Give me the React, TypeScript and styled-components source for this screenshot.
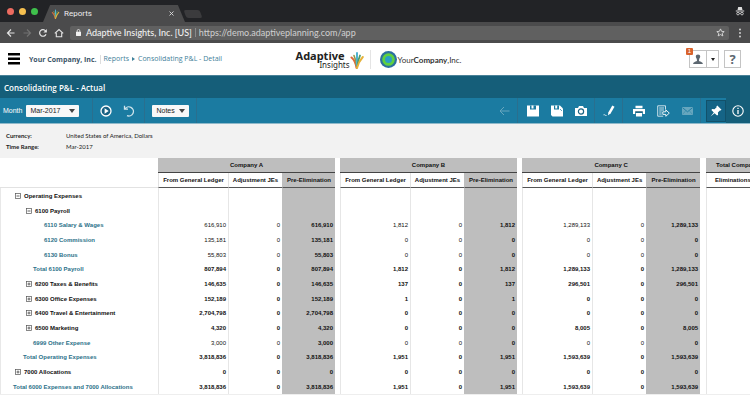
import React from "react";
import styled, { createGlobalStyle, css } from "styled-components";

const GlobalStyle = createGlobalStyle`
  *, *::before, *::after { box-sizing: border-box; }
  body { margin: 0; background: #fff; font-family: "Liberation Sans", Arial, sans-serif; }
  button, input, select { font: inherit; color: inherit; margin: 0; padding: 0; border: 0; background: none; }
  a { color: inherit; text-decoration: none; }
  svg { display: block; flex: none; }
`;

const Page = styled.div`
  display: flex;
  flex-direction: column;
  min-height: 100vh;
  overflow: hidden;
`;

/* Browser window */

const TabStrip = styled.div`
  display: flex;
  align-items: flex-end;
  height: 22px;
  padding: 0 5px 0 7px;
  background: #222326;
`;

const WindowButtons = styled.div`
  display: flex;
  align-self: center;
  gap: 5px;
`;

const WindowButton = styled.button<{ $color: string }>`
  width: 7px;
  height: 7px;
  border-radius: 50%;
  background: ${(p) => p.$color};
`;

const Tab = styled.div`
  display: flex;
  align-items: center;
  width: 142px;
  height: 17px;
  margin-left: 5px;
  padding: 0 10px 0 8px;
  background: #4b4b4c;
  color: #ececec;
  clip-path: polygon(5% 0, 95% 0, 100% 100%, 0 100%);
  font: 8px/12px Roboto, sans-serif;
`;

const TabTitle = styled.span`
  flex: 1;
  margin-left: 4px;
`;

const TabClose = styled.button`
  display: flex;
  padding: 1px;
`;

const NewTab = styled.button`
  align-self: center;
  width: 16px;
  height: 8px;
  margin: 6px 0 0 0;
  border-radius: 2px;
  background: #3b3b3d;
  transform: skewX(20deg);
`;

const Incognito = styled.div`
  align-self: center;
  margin-left: auto;
`;

const AddressRow = styled.div`
  display: flex;
  align-items: center;
  height: 21px;
  padding: 0 7px 0 6px;
  background: #4b4b4c;
  color: #e2e2e2;
`;

const NavButtons = styled.div`
  display: flex;
  gap: 6px;
`;

const NavButton = styled.button`
  display: flex;
  &:disabled { color: #727272; }
`;

const Omnibox = styled.div`
  display: flex;
  flex: 1;
  align-items: center;
  height: 14px;
  margin: 0 8px 0 6px;
  padding: 0 4px 0 6px;
  border-radius: 2px;
  background: #606060;
  font: 9px/14px Lato, sans-serif;
`;

const SiteIdentity = styled.span`
  margin: 0 3px 0 5px;
  padding-right: 3px;
  border-right: 1px solid #8a8a8a;
  line-height: 9px;
  font-weight: 500;
  color: #f0f0f0;
  white-space: nowrap;
`;

const UrlInput = styled.input`
  flex: 1;
  min-width: 0;
  height: 14px;
  color: #d0d0d0;
  outline: none;
`;

/* Application header */

const AppHeader = styled.header`
  display: grid;
  grid-template-columns: 1fr auto 1fr;
  align-items: center;
  height: 32px;
  padding: 0 9px 0 8px;
`;

const HeaderLeft = styled.div`
  display: flex;
  align-items: center;
  gap: 9px;
`;

const MenuButton = styled.button`
  display: flex;
`;

const Breadcrumbs = styled.nav`
  display: flex;
  align-items: center;
  color: #3f819a;
  font: 7px/12px "Open Sans", sans-serif;
  white-space: nowrap;
`;

const CrumbHome = styled.a`
  margin-right: 3px;
  padding-right: 3px;
  border-right: 1px solid #ddd;
  color: #3b5468;
  font-weight: 700;
  line-height: 9px;
`;

const CrumbMark = styled.span`
  margin: 0 3px;
`;

const Logos = styled.div`
  display: flex;
  align-items: center;
  margin: 1px 0 0 8px;
`;

const AdaptiveLogo = styled.div`
  display: flex;
  align-items: center;
  padding-right: 6px;
  border-right: 1px solid #e4e4e4;
`;

const Wordmark = styled.div`
  display: flex;
  flex-direction: column;
  align-items: flex-end;
  color: #222;
  font: 8px/8px "Noto Sans", sans-serif;

  strong {
    margin-right: 5px;
    font: 700 11px/11px "Noto Sans", sans-serif;
  }
`;

const CompanyLogo = styled.div`
  display: flex;
  align-items: center;
  padding-left: 9px;
  gap: 1px;
  color: #333;
  font: 8px/12px Lato, sans-serif;
`;

const HeaderRight = styled.div`
  display: flex;
  justify-content: flex-end;
  gap: 5px;
`;

const UserMenu = styled.div`
  position: relative;
  display: flex;
`;

const BoxButton = styled.button<{ $width: number }>`
  display: flex;
  align-items: center;
  justify-content: center;
  width: ${(p) => p.$width}px;
  height: 18px;
  border: 1px solid #c4c4c4;
  color: #5c6770;
  font: 700 13px/16px "Open Sans", sans-serif;
  & + & { border-left: 0; }
`;

const Badge = styled.span`
  position: absolute;
  top: -2px;
  left: -3px;
  width: 7px;
  height: 7px;
  border-radius: 1px;
  background: #d9622b;
  color: #fff;
  font: 6px/7px "Liberation Sans", sans-serif;
  text-align: center;
`;

/* Report chrome */

const TitleBar = styled.h1`
  margin: 0;
  padding: 4px 4px 3px;
  border-top: 1px solid #4a8298;
  background: #155e79;
  color: #fff;
  font: 600 8px/15px "Open Sans", sans-serif;
`;

const Toolbar = styled.div`
  display: flex;
  align-items: stretch;
  height: 26px;
  border-bottom: 1px solid #8fb9ca;
  background: #1b7ba1;
  color: #fff;
`;

const ToolGroup = styled.div<{ $gap: number; $pad: string }>`
  display: flex;
  align-items: center;
  gap: ${(p) => p.$gap}px;
  padding: ${(p) => p.$pad};
  border-right: 1px solid #2a6f8e;
  &:last-of-type { border-right: 0; }
`;

const ToolSpacer = styled.div`
  flex: 1;
`;

const FieldLabel = styled.label`
  display: flex;
  align-items: center;
  gap: 4px;
  font: 7px/12px "Liberation Sans", sans-serif;
`;

const SelectBox = styled.span<{ $width: number }>`
  position: relative;
  display: flex;
  width: ${(p) => p.$width}px;

  svg {
    position: absolute;
    right: 4px;
    top: 4px;
    pointer-events: none;
  }
`;

const Select = styled.select`
  width: 100%;
  height: 12px;
  padding: 0 4px;
  border-radius: 1px;
  background: #f8f8f8;
  color: #222;
  font: 7px/12px "Liberation Sans", sans-serif;
  appearance: none;
`;

const ToolButton = styled.button<{ $on?: boolean }>`
  display: flex;
  align-items: center;
  justify-content: center;
  &:disabled { color: #66a6be; }
  ${(p) =>
    p.$on &&
    css`
      width: 20px;
      height: 22px;
      border: 1px solid #12516a;
      background: #156486;
    `}
`;

const InfoButton = styled(ToolButton)`
  width: 24px;
  background: #155e79;
`;

const Meta = styled.dl`
  display: grid;
  grid-template-columns: 60px 1fr;
  row-gap: 1px;
  margin: 0;
  padding: 7px 6px 6px;
  background: #f2f2f2;
  color: #222;
  font: 6px/10px Lato, sans-serif;

  dt { font-weight: 700; }
  dd { margin: 0; }
`;

/* Report table */

const TableScroller = styled.div`
  overflow: hidden;
`;

const Table = styled.table`
  width: 100%;
  min-width: 776px;
  table-layout: fixed;
  border-collapse: separate;
  border-spacing: 0;
  border-bottom: 1px solid #eee;
  color: #111;
  font: 6px/10px "Liberation Sans", sans-serif;
  white-space: nowrap;

  th, td { padding: 0; }
`;

const Col = styled.col<{ $width?: number }>`
  width: ${(p) => (p.$width ? `${p.$width}px` : "auto")};
`;

const GroupHead = styled.th<{ $left?: boolean }>`
  height: 15px;
  border-bottom: 1px solid #444;
  background: #bebebe;

  && {
    text-align: ${(p) => (p.$left ? "left" : "center")};
    padding-left: ${(p) => (p.$left ? 10 : 0)}px;
  }
`;

const ColumnHead = styled.th<{ $shaded?: boolean; $left?: boolean }>`
  height: 15px;
  border-bottom: 1px solid #555;
  border-left: 1px solid ${(p) => (p.$shaded ? "#bebebe" : "#e2e2e2")};
  background: ${(p) => (p.$shaded ? "#bebebe" : "#fff")};

  && {
    text-align: ${(p) => (p.$left ? "left" : "center")};
    padding-left: ${(p) => (p.$left ? 8 : 0)}px;
  }
`;

const CornerHead = styled.th`
  border-bottom: 1px solid #e2e2e2;
`;

const BodyRow = styled.tr`
  height: 15px;
  &:nth-child(3n) { height: 14px; }
`;

const Gap = styled.td``;

const RowHead = styled.th<{ $indent: number; $link?: boolean }>`
  border-left: 1px solid #e8e8e8;
  text-align: left;
  color: ${(p) => (p.$link ? "#2b7189" : "#111")};
  && { padding-left: ${(p) => p.$indent}px; }
`;

const RowLabel = styled.span`
  display: flex;
  align-items: center;
  gap: 3px;
`;

const Expander = styled.button`
  display: flex;
  color: #555;
`;

const Value = styled.td<{ $bold?: boolean; $shaded?: boolean }>`
  border-left: 1px solid ${(p) => (p.$shaded ? "#bebebe" : "#e6e6e6")};
  background: ${(p) => (p.$shaded ? "#bebebe" : "#fff")};
  font-weight: ${(p) => (p.$bold ? 700 : 400)};
  text-align: right;
  && { padding-right: 2px; }
`;

type Row = {
  label: string;
  indent: number;
  expander?: "open" | "closed";
  link?: boolean;
  plain?: boolean;
  values?: [string, string, string];
};

const rows: Row[] = [
  { label: "Operating Expenses", indent: 14, expander: "open" },
  { label: "6100 Payroll", indent: 25, expander: "open" },
  { label: "6110 Salary & Wages", indent: 43, link: true, plain: true, values: ["616,910", "1,812", "1,289,133"] },
  { label: "6120 Commission", indent: 43, link: true, plain: true, values: ["135,181", "0", "0"] },
  { label: "6130 Bonus", indent: 43, link: true, plain: true, values: ["55,803", "0", "0"] },
  { label: "Total 6100 Payroll", indent: 32, link: true, values: ["807,894", "1,812", "1,289,133"] },
  { label: "6200 Taxes & Benefits", indent: 25, expander: "closed", values: ["146,635", "137", "296,501"] },
  { label: "6300 Office Expenses", indent: 25, expander: "closed", values: ["152,189", "1", "0"] },
  { label: "6400 Travel & Entertainment", indent: 25, expander: "closed", values: ["2,704,798", "0", "0"] },
  { label: "6500 Marketing", indent: 25, expander: "closed", values: ["4,320", "0", "8,005"] },
  { label: "6999 Other Expense", indent: 32, link: true, plain: true, values: ["3,000", "0", "0"] },
  { label: "Total Operating Expenses", indent: 22, link: true, values: ["3,818,836", "1,951", "1,593,639"] },
  { label: "7000 Allocations", indent: 14, expander: "closed", values: ["0", "0", "0"] },
  { label: "Total 6000 Expenses and 7000 Allocations", indent: 12, link: true, values: ["3,818,836", "1,951", "1,593,639"] },
];

const companies = ["Company A", "Company B", "Company C"];

const columnWidths = [
  [70, 54, 53, 5],
  [70, 54, 53, 5],
  [70, 54, 54, 6],
];

const Leaf = ({ width, height }: { width: number; height: number }) => (
  <svg width={width} height={height} viewBox="0 0 14 18" fill="none" strokeLinecap="round">
    <path d="M6.5 17C6 13 4.500 9 1.500 6.500" stroke="#e0693c" strokeWidth="2" />
    <path d="M6.500 15C6.500 12 5.500 8 4 4.500" stroke="#8f9a4c" strokeWidth="1.600" />
    <path d="M7 14V2" stroke="#4fb3d2" strokeWidth="2" />
    <path d="M7.500 14C8 10 9 7 10 4.500" stroke="#4f9b6a" strokeWidth="1.800" />
    <path d="M7 17C8 13 10 9 12.800 6" stroke="#e5b23a" strokeWidth="2" />
  </svg>
);

const Caret = () => (
  <svg width="6" height="4" viewBox="0 0 6 4">
    <path d="M0 0h6L3 4z" fill="#444" />
  </svg>
);

const ExpanderIcon = ({ closed }: { closed: boolean }) => (
  <svg width="6" height="6" viewBox="0 0 6 6" fill="none" stroke="currentColor">
    <rect x=".5" y=".5" width="5" height="5" strokeWidth=".7" />
    <path d={closed ? "M1.500 3h3M3 1.500v3" : "M1.500 3h3"} strokeWidth=".9" />
  </svg>
);

export default function App() {
  return (
    <Page>
      <GlobalStyle />
      <TabStrip>
        <WindowButtons>
          <WindowButton $color="#ed6b60" aria-label="Close window" />
          <WindowButton $color="#f5bf4f" aria-label="Minimize window" />
          <WindowButton $color="#3fc04c" aria-label="Zoom window" />
        </WindowButtons>
        <Tab>
          <Leaf width={9} height={10} />
          <TabTitle>Reports</TabTitle>
          <TabClose aria-label="Close tab">
            <svg width="5" height="5" viewBox="0 0 5 5" stroke="#ddd" strokeWidth=".9">
              <path d="M.5.5l4 4M4.500.5l-4 4" />
            </svg>
          </TabClose>
        </Tab>
        <NewTab aria-label="New tab" />
        <Incognito>
          <svg width="10" height="10" viewBox="0 0 10 10" fill="#ddd">
            <path d="M2.500 4L3.200 1h3.600l.7 3zM.8 4.600h8.400v.9H.8z" />
            <g fill="none" stroke="#ddd" strokeWidth=".8">
              <circle cx="3" cy="7.600" r="1.300" />
              <circle cx="7" cy="7.600" r="1.300" />
              <path d="M4.300 7.400h1.400" />
            </g>
          </svg>
        </Incognito>
      </TabStrip>

      <AddressRow>
        <NavButtons>
          <NavButton aria-label="Back">
            <svg width="10" height="10" viewBox="0 0 10 10" fill="none" stroke="currentColor" strokeWidth="1.200">
              <path d="M8.500 5h-7M5 1.500L1.500 5 5 8.500" />
            </svg>
          </NavButton>
          <NavButton aria-label="Forward" disabled>
            <svg width="10" height="10" viewBox="0 0 10 10" fill="none" stroke="currentColor" strokeWidth="1.200">
              <path d="M1.500 5h7M5 1.500L8.500 5 5 8.500" />
            </svg>
          </NavButton>
          <NavButton aria-label="Reload">
            <svg width="10" height="10" viewBox="0 0 10 10" fill="none" stroke="currentColor" strokeWidth="1.200">
              <path d="M8 6.200A3.300 3.300 0 1 1 7.600 3L8.300 3.700" />
              <path d="M8.800 1v3.400H5.400z" fill="currentColor" stroke="none" />
            </svg>
          </NavButton>
          <NavButton aria-label="Home">
            <svg width="10" height="10" viewBox="0 0 10 10" fill="none" stroke="currentColor" strokeWidth="1.100">
              <path d="M.8 5.300L5 1.500l4.200 3.800M2.300 4.800v3.900h5.400V4.800" />
            </svg>
          </NavButton>
        </NavButtons>
        <Omnibox>
          <svg width="5" height="7" viewBox="0 0 5 7">
            <rect y="2.700" width="5" height="4.300" rx=".4" fill="#f2f2f2" />
            <path d="M1.200 3V1.800a1.300 1.300 0 0 1 2.600 0V3" fill="none" stroke="#f2f2f2" strokeWidth=".8" />
          </svg>
          <SiteIdentity>Adaptive Insights, Inc. [US]</SiteIdentity>
          <UrlInput aria-label="Address" defaultValue="https://demo.adaptiveplanning.com/app" />
          <NavButton aria-label="Bookmark">
            <svg width="9" height="9" viewBox="0 0 10 10" fill="none" stroke="#ddd" strokeWidth="1">
              <path d="M5 1l1.200 2.700 2.900.3-2.200 1.900.7 2.900L5 7.300 2.400 8.800l.7-2.900L.9 4l2.900-.3z" />
            </svg>
          </NavButton>
        </Omnibox>
        <NavButton aria-label="Browser menu">
          <svg width="6" height="10" viewBox="0 0 6 10" fill="#ddd">
            <circle cx="3" cy="1.500" r=".9" />
            <circle cx="3" cy="5" r=".9" />
            <circle cx="3" cy="8.500" r=".9" />
          </svg>
        </NavButton>
      </AddressRow>

      <AppHeader>
        <HeaderLeft>
          <MenuButton aria-label="Menu">
            <svg width="12" height="12" viewBox="0 0 12 12" fill="#000">
              <path d="M0 0h12v2.500H0zM0 4.500h12V7H0zM0 9h12v2.500H0z" />
            </svg>
          </MenuButton>
          <Breadcrumbs aria-label="Breadcrumb">
            <CrumbHome href="#home">Your Company, Inc.</CrumbHome>
            <a href="#reports">Reports</a>
            <CrumbMark>
              <svg width="3" height="4" viewBox="0 0 3 4">
                <path d="M0 0l3 2-3 2z" fill="#3f819a" />
              </svg>
            </CrumbMark>
            <a href="#detail">Consolidating P&amp;L - Detail</a>
          </Breadcrumbs>
        </HeaderLeft>
        <Logos>
          <AdaptiveLogo>
            <Wordmark>
              <strong>Adaptive</strong>
              <span>Insights</span>
            </Wordmark>
            <Leaf width={14} height={18} />
          </AdaptiveLogo>
          <CompanyLogo>
            <svg width="17" height="17" viewBox="0 0 17 17">
              <circle cx="8.500" cy="8.500" r="8.500" fill="#2b6f9f" />
              <circle cx="8.500" cy="8.500" r="6.300" fill="#5fd03f" />
              <circle cx="8.500" cy="8.500" r="3.500" fill="#2a9fc4" />
            </svg>
            <span>
              Your<b>Company</b>,Inc.
            </span>
          </CompanyLogo>
        </Logos>
        <HeaderRight>
          <UserMenu>
            <BoxButton $width={18} aria-label="Account">
              <svg width="10" height="11" viewBox="0 0 10 11" fill="currentColor">
                <path d="M5 .5c1.400 0 2.200.9 2.200 2.100S6.400 4.400 6.200 5l-.2 2c.3.500 3.700.6 3.900 3H.1C.3 7.600 3.700 7.500 4 7l-.2-2c-.2-.6-1-1.200-1-2.400S3.600.5 5 .5z" />
              </svg>
            </BoxButton>
            <BoxButton $width={12} aria-label="Account options">
              <svg width="4" height="3" viewBox="0 0 4 3">
                <path d="M0 0h4L2 3z" fill="#222" />
              </svg>
            </BoxButton>
            <Badge>1</Badge>
          </UserMenu>
          <BoxButton $width={17} aria-label="Help">
            ?
          </BoxButton>
        </HeaderRight>
      </AppHeader>

      <TitleBar>Consolidating P&amp;L - Actual</TitleBar>

      <Toolbar>
        <ToolGroup $gap={0} $pad="0 13px 0 3px">
          <FieldLabel>
            Month
            <SelectBox $width={53}>
              <Select defaultValue="Mar-2017">
                <option>Mar-2017</option>
              </Select>
              <Caret />
            </SelectBox>
          </FieldLabel>
        </ToolGroup>
        <ToolGroup $gap={11} $pad="0 9px 0 7px">
          <ToolButton aria-label="Run">
            <svg width="12" height="12" viewBox="0 0 12 12">
              <circle cx="6" cy="6" r="5" fill="#176083" stroke="#fff" strokeWidth="1.300" />
              <path d="M4.600 3.300L8.700 6 4.600 8.700z" fill="#fff" />
            </svg>
          </ToolButton>
          <ToolButton aria-label="Reset">
            <svg width="12" height="12" viewBox="0 0 12 12" fill="none" stroke="#cfe4ec" strokeWidth="1.300">
              <path d="M1.500.8v3.400H5M1.800 4.200A4.600 4.600 0 1 1 4 10.700" />
            </svg>
          </ToolButton>
        </ToolGroup>
        <ToolGroup $gap={0} $pad="0 7px">
          <SelectBox $width={37}>
            <Select aria-label="Notes" defaultValue="Notes">
              <option>Notes</option>
            </Select>
            <Caret />
          </SelectBox>
        </ToolGroup>
        <ToolSpacer />
        <ToolGroup $gap={0} $pad="0 7px">
          <ToolButton aria-label="Back" disabled>
            <svg width="11" height="10" viewBox="0 0 11 10" fill="none" stroke="currentColor" strokeWidth="1">
              <path d="M10.500 5H1M5 1L1 5l4 4" />
            </svg>
          </ToolButton>
        </ToolGroup>
        <ToolGroup $gap={12} $pad="0 7px 0 9px">
          <ToolButton aria-label="Save">
            <svg width="12" height="12" viewBox="0 0 12 12" fill="#fff">
              <path d="M0 .5h12v11H0z" />
              <path d="M3 .5h6v4H3z" fill="#1b7ba1" />
              <path d="M4.500.5h2v3h-2z" />
            </svg>
          </ToolButton>
          <ToolButton aria-label="Save as">
            <svg width="12" height="12" viewBox="0 0 12 12" fill="#fff">
              <path d="M0 .5h9l3 3v8H1.500L0 10z" />
              <path d="M3 .5h5v4H3z" fill="#1b7ba1" />
              <path d="M4.200.5h2v3h-2z" />
              <path d="M9 4L11 6" stroke="#1b7ba1" strokeWidth=".7" />
            </svg>
          </ToolButton>
          <ToolButton aria-label="Snapshot">
            <svg width="12" height="12" viewBox="0 0 12 12" fill="#fff">
              <path d="M0 3h3l1-2h4l1 2h3v8H0z" />
              <circle cx="6" cy="6.500" r="2.600" fill="none" stroke="#1b6483" strokeWidth="1.200" />
            </svg>
          </ToolButton>
        </ToolGroup>
        <ToolGroup $gap={0} $pad="0 7px 0 8px">
          <ToolButton aria-label="Edit">
            <svg width="12" height="12" viewBox="0 0 12 12" fill="#fff">
              <path d="M9.300.5L11.500 1.700 7.600 8.600 5 10.300l.3-2.900z" />
              <path d="M.5 9.800c1.300-.6 1.500.9 3 .7" fill="none" stroke="#fff" strokeWidth=".8" />
            </svg>
          </ToolButton>
        </ToolGroup>
        <ToolGroup $gap={12} $pad="0 7px 0 10px">
          <ToolButton aria-label="Print">
            <svg width="12" height="12" viewBox="0 0 12 12" fill="#fff">
              <path d="M2.500.8h7v2.400h-7zM0 4h12v5h-2.200V7H2.200v2H0z" />
              <path d="M3 8h6v3.500H3z" />
              <path d="M2.200 6.300h7.600v1.100H2.200z" fill="#184f68" />
            </svg>
          </ToolButton>
          <ToolButton aria-label="Export">
            <svg width="13" height="12" viewBox="0 0 13 12" fill="none" stroke="#c8dfe8">
              <path d="M8.500 4.500V.8H.7v10.400h5.500M2.200 3h4.800M2.200 5h4.800M2.200 7h2.500M2.200 9h2.500" strokeWidth="1" />
              <path d="M5.800 6.800h3V4.900l3.500 3.200-3.500 3.200V9.400h-3z" fill="#1b7ba1" stroke="#fff" strokeWidth=".9" />
            </svg>
          </ToolButton>
          <ToolButton aria-label="E-mail" disabled>
            <svg width="11" height="8" viewBox="0 0 11 8">
              <rect width="11" height="8" fill="#66a6be" />
              <path d="M.5.700L5.500 4.800 10.500.700" fill="none" stroke="#1b7ba1" strokeWidth=".9" />
              <path d="M.5 7.500l3-3.500M10.500 7.500l-3-3.500" fill="none" stroke="#1b7ba1" strokeWidth=".4" />
            </svg>
          </ToolButton>
        </ToolGroup>
        <ToolGroup $gap={0} $pad="0 0 0 5px">
          <ToolButton $on aria-label="Pin toolbar" aria-pressed="true">
            <svg width="12" height="12" viewBox="0 0 12 12" fill="#fff">
              <path d="M7.300.5l4.200 4.200-.9.900-.7-.2-2 2.200.2 2.200-1 .8L4.600 8.200.5 11.500 3.800 7.400 1.400 5l.8-1 2.300.2 2.100-2-.2-.8z" />
            </svg>
          </ToolButton>
        </ToolGroup>
        <InfoButton aria-label="Information">
          <svg width="12" height="12" viewBox="0 0 12 12" fill="none" stroke="#fff">
            <circle cx="6" cy="6" r="5.200" strokeWidth="1.100" />
            <path d="M6 5v4M6 2.700v1.300" strokeWidth="1.300" />
          </svg>
        </InfoButton>
      </Toolbar>

      <Meta>
        <dt>Currency:</dt>
        <dd>United States of America, Dollars</dd>
        <dt>Time Range:</dt>
        <dd>Mar-2017</dd>
      </Meta>

      <TableScroller>
        <Table>
          <colgroup>
            <Col $width={158} />
            {columnWidths.flat().map((width, i) => (
              <Col key={i} $width={width} />
            ))}
            <Col />
          </colgroup>
          <thead>
            <tr>
              <CornerHead rowSpan={2} aria-label="Account" />
              {companies.map((c) => (
                <React.Fragment key={c}>
                  <GroupHead colSpan={3}>{c}</GroupHead>
                  <Gap />
                </React.Fragment>
              ))}
              <GroupHead $left>Total Company</GroupHead>
            </tr>
            <tr>
              {companies.map((c) => (
                <React.Fragment key={c}>
                  <ColumnHead>From General Ledger</ColumnHead>
                  <ColumnHead>Adjustment JEs</ColumnHead>
                  <ColumnHead $shaded>Pre-Elimination</ColumnHead>
                  <Gap />
                </React.Fragment>
              ))}
              <ColumnHead $left>Eliminations</ColumnHead>
            </tr>
          </thead>
          <tbody>
            {rows.map((row) => (
              <BodyRow key={row.label}>
                <RowHead scope="row" $indent={row.indent} $link={row.link}>
                  <RowLabel>
                    {row.expander && (
                      <Expander aria-label={`Toggle ${row.label}`}>
                        <ExpanderIcon closed={row.expander === "closed"} />
                      </Expander>
                    )}
                    {row.link ? <a href="#account">{row.label}</a> : row.label}
                  </RowLabel>
                </RowHead>
                {companies.map((c, i) => (
                  <React.Fragment key={c}>
                    <Value $bold={!row.plain}>{row.values?.[i]}</Value>
                    <Value $bold={!row.plain}>{row.values && "0"}</Value>
                    <Value $bold $shaded>
                      {row.values?.[i]}
                    </Value>
                    <Gap />
                  </React.Fragment>
                ))}
                <Value />
              </BodyRow>
            ))}
          </tbody>
        </Table>
      </TableScroller>
    </Page>
  );
}
